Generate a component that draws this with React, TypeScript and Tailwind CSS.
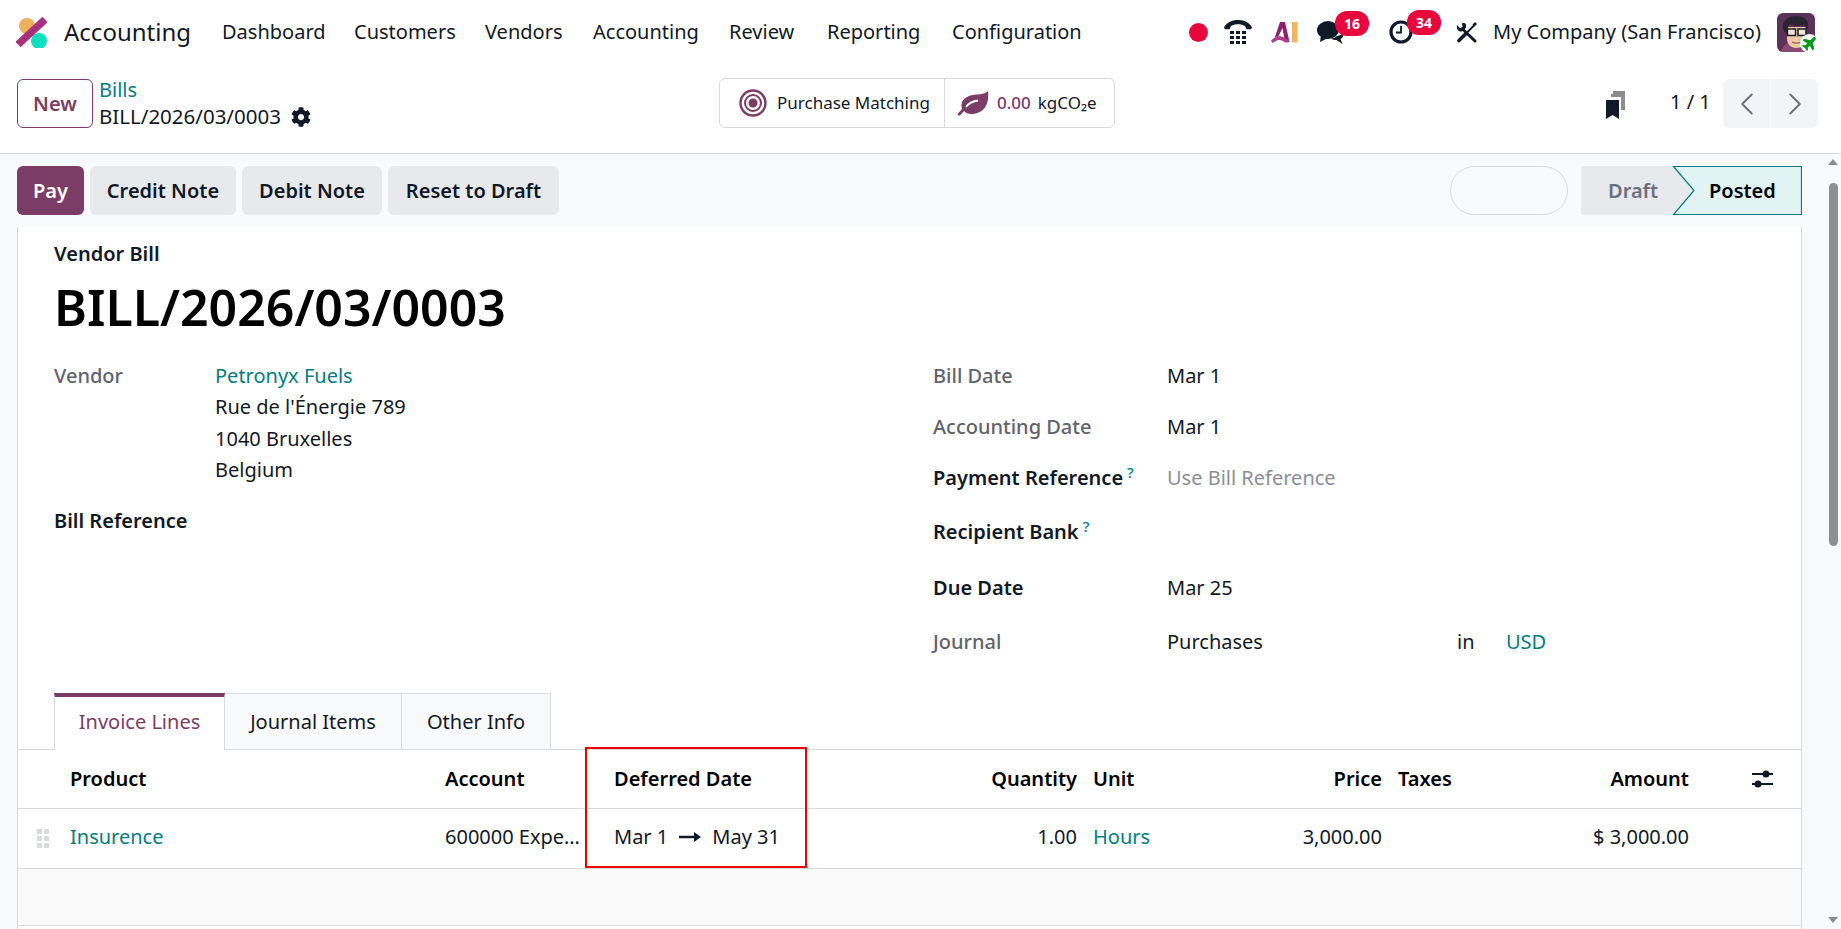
import { ChevronLeft, ChevronRight } from 'lucide-react'
import { FaCog, FaPlane } from 'react-icons/fa'

const navItems = [
  { label: 'Dashboard', width: 'w-[132px]' },
  { label: 'Customers', width: 'w-[131px]' },
  { label: 'Vendors', width: 'w-[108px]' },
  { label: 'Accounting', width: 'w-[136px]' },
  { label: 'Review', width: 'w-[98px]' },
  { label: 'Reporting', width: 'w-[125px]' },
  { label: 'Configuration', width: 'w-[132px]' },
]

const tableColumns =
  'grid grid-cols-[52px_375px_169px_169px_294px_183px_122px_178px_129px_112px] items-center border-b border-[#d8dadd]'

function AppLogo() {
  return (
    <svg width="32" height="32" viewBox="0 0 32 32" aria-hidden="true">
      <circle cx="11" cy="10" r="8" fill="#eeb05c" />
      <circle cx="23" cy="25" r="8" fill="#0ce0bd" />
      <path d="M2 28.500 29 3.500" stroke="#a9327f" strokeWidth="7.500" />
      <path d="M8 23 23 9" stroke="#6e1f50" strokeWidth="1.200" strokeDasharray="1 3" />
    </svg>
  )
}

function PhoneIcon() {
  return (
    <svg width="28" height="25" viewBox="0 0 28 25" fill="#111827" aria-hidden="true">
      <path d="M0 7.500C3 2 8 0 14 0s11 2 14 7.500l-1 1.800h-4.500L21 6c-2-1.200-4.500-1.800-7-1.800S9 4.800 7 6L5.500 9.300H1Z" />
      <rect x="6" y="11" width="4" height="3" />
      <rect x="12" y="11" width="4" height="3" />
      <rect x="18" y="11" width="4" height="3" />
      <rect x="6" y="16" width="4" height="3" />
      <rect x="12" y="16" width="4" height="3" />
      <rect x="18" y="16" width="4" height="3" />
      <rect x="6" y="21" width="4" height="3" />
      <rect x="12" y="21" width="4" height="3" />
      <rect x="18" y="21" width="4" height="3" />
    </svg>
  )
}

function AiIcon() {
  return (
    <svg width="27" height="21" viewBox="0 0 27 21" aria-hidden="true">
      <path d="M9 0h5l4.500 20H14L11.500 6 7 15H4Z" fill="#8e1f6e" />
      <path d="M0 19c3-5 9-6 13-3.500l4.500 2.500.5 2.500h-4c-3-3-7-3.500-10-1L1.500 21Z" fill="#b0408c" />
      <rect x="21" y="0" width="5.500" height="20.500" fill="#f0b660" />
    </svg>
  )
}

function ChatIcon() {
  return (
    <svg width="28" height="23" viewBox="0 0 28 23" fill="#111827" aria-hidden="true">
      <ellipse cx="11" cy="9" rx="11" ry="9" />
      <path d="M4 14 3 21l8-4Z" />
      <path d="M20 15c3-.5 5-1.500 6-3 1 3-.2 5-2.500 6l2 5-6-4c-2 0-4-.5-5.500-1.500 2.500 0 4.500-1 6-2.500Z" />
    </svg>
  )
}

function ClockIcon() {
  return (
    <svg width="24" height="24" viewBox="0 0 24 24" fill="none" stroke="#111827" aria-hidden="true">
      <circle cx="12" cy="12" r="10" strokeWidth="3.200" />
      <path d="M12 6v6.500H7" strokeWidth="1.800" />
    </svg>
  )
}

function ToolsIcon() {
  return (
    <svg width="21" height="21" viewBox="0 0 21 21" fill="#111827" aria-hidden="true">
      <path d="M1 3l3 3 2.500-1L6 1.500C8.500 0 11 2.500 10 5.500L8 8 5.500 9.500C2.500 10 0 6.500 1 3Z" />
      <path d="M7 7.500 19 19" stroke="#111827" strokeWidth="3" strokeLinecap="round" />
      <path d="M18 3.500 11 10.500" stroke="#111827" strokeWidth="1.800" />
      <path d="M9.500 12 3 18.500" stroke="#111827" strokeWidth="3.600" strokeLinecap="round" />
      <path d="M16.500 2.500 19 0l2 2-2.500 2.500Z" />
    </svg>
  )
}

function Avatar() {
  return (
    <div className="relative h-[39px] w-[39px]">
      <svg width="38" height="39" viewBox="0 0 38 39" aria-hidden="true" className="rounded-[6px]">
        <rect width="38" height="39" fill="#5c3358" />
        <path d="M5 39c0-7 5-9 9-10h10c5 1 8 3 8 10Z" fill="#8a4a74" />
        <path d="M10 14h19v12c0 6-5 9-10 9s-9-4-9-9Z" fill="#efc9a4" />
        <path d="M6 16C4 9 10 3 19 3c7 0 13 3 12 11l-2 3-1-5c-6 1-11 1-16-1l-2 8-2 1Z" fill="#2a2430" />
        <rect x="10.500" y="16" width="8" height="6.500" fill="#f3e7da" stroke="#1d1d26" strokeWidth="1.500" />
        <rect x="21" y="16" width="8" height="6.500" fill="#f3e7da" stroke="#1d1d26" strokeWidth="1.500" />
        <path d="M15 29c3 1.500 6 1.500 9 0" stroke="#9c5a48" strokeWidth="1.300" fill="none" />
      </svg>
      <span className="absolute right-[-3px] bottom-[-1px] flex h-[19px] w-[19px] items-center justify-center rounded-full bg-white text-[#0c9a1e]">
        <FaPlane size={16} className="-rotate-45" aria-hidden="true" />
      </span>
    </div>
  )
}

function Badge({ value }: { value: number }) {
  return (
    <span className="absolute top-[-10px] left-[18px] flex h-[25px] w-[34px] items-center justify-center rounded-[12px] bg-[#e8063c] text-[14px] font-bold text-white">
      {value}
    </span>
  )
}

function TargetIcon() {
  return (
    <svg width="28" height="28" viewBox="0 0 28 28" fill="none" stroke="#7b3d65" aria-hidden="true">
      <circle cx="14" cy="14" r="12.500" strokeWidth="2.400" />
      <circle cx="14" cy="14" r="8" strokeWidth="2" />
      <circle cx="14" cy="14" r="4.500" fill="#7b3d65" stroke="none" />
    </svg>
  )
}

function LeafIcon() {
  return (
    <svg width="32" height="25" viewBox="0 0 32 25" aria-hidden="true">
      <path d="M31 0C32.500 12 28 22 16 23c-4 .5-7-1-9-3l-4 4.500C1.500 25 0 24 1 22.500L5 18C2 8 12 3.500 20 3.500 25 3.500 29 2 31 0Z" fill="#7b3d65" />
      <path d="M9 16c3-4 7-6 12-6.500" stroke="#fff" strokeWidth="1.800" fill="none" />
    </svg>
  )
}

function BookmarkIcon() {
  return (
    <svg width="19" height="28" viewBox="0 0 19 28" aria-hidden="true">
      <path d="M7 0h12v19h-2V4H7Z" fill="#8d8d8d" />
      <path d="M5 3h12v16h-2V6H5Z" fill="#8d8d8d" />
      <path d="M0 9h13v19l-6.500-4L0 28Z" fill="#111827" />
    </svg>
  )
}

function ColumnsIcon() {
  return (
    <svg width="21" height="18" viewBox="0 0 21 18" fill="#111827" aria-hidden="true">
      <rect y="3" width="21" height="2" />
      <rect y="13" width="21" height="2" />
      <circle cx="14" cy="4" r="3.500" />
      <circle cx="6" cy="14" r="3.500" />
    </svg>
  )
}

function FieldRow({
  label,
  strong,
  help,
  height,
  children,
}: {
  label: string
  strong?: boolean
  help?: boolean
  height: string
  children?: React.ReactNode
}) {
  return (
    <div className={`flex items-start leading-[32px] ${height}`}>
      <div className={`w-[234px] whitespace-nowrap ${strong ? 'font-semibold text-[#111827]' : 'font-medium text-[#5f636f]'}`}>
        {label}
        {help && <sup className="ml-1 text-[15px] font-medium text-[#017e84]">?</sup>}
      </div>
      {children}
    </div>
  )
}

export default function App() {
  return (
    <div
      className="flex h-[929px] w-[1841px] flex-col overflow-hidden bg-white text-[20px] text-[#111827]"
      style={{ fontFamily: '"Noto Sans", sans-serif' }}
    >
      <header className="flex h-[64px] shrink-0 items-center pl-[16px]">
        <AppLogo />
        <span className="ml-[16px] w-[158px] text-[24px]">Accounting</span>
        <nav className="flex">
          {navItems.map((item) => (
            <span key={item.label} className={`whitespace-nowrap ${item.width}`}>
              {item.label}
            </span>
          ))}
        </nav>
        <div className="ml-[105px] h-[19px] w-[19px] rounded-full bg-[#e8063c]" />
        <div className="ml-[16px]">
          <PhoneIcon />
        </div>
        <div className="ml-[19px]">
          <AiIcon />
        </div>
        <div className="relative ml-[19px]">
          <ChatIcon />
          <Badge value={16} />
        </div>
        <div className="relative ml-[44px]">
          <ClockIcon />
          <Badge value={34} />
        </div>
        <div className="ml-[43px]">
          <ToolsIcon />
        </div>
        <span className="ml-[16px] w-[284px] whitespace-nowrap">My Company (San Francisco)</span>
        <Avatar />
      </header>

      <div className="flex h-[90px] shrink-0 items-start border-b border-[#d8dadd] pt-[15px] pl-[17px]">
        <button
          type="button"
          className="h-[49px] w-[76px] rounded-[6px] border border-[#7b3d65] bg-white font-semibold text-[#7b3d65]"
        >
          New
        </button>
        <div className="-mt-[3px] ml-[6px] w-[620px] leading-[27px]">
          <div className="text-[#017e84]">Bills</div>
          <div className="flex items-center gap-[10px] text-[20.500px]">
            BILL/2026/03/0003
            <FaCog size={20} aria-hidden="true" />
          </div>
        </div>
        <div className="flex h-[50px] w-[396px] -translate-y-[1px] items-center rounded-[6px] border border-[#d8dadd] text-[17px]">
          <div className="flex h-full w-[225px] items-center gap-[10px] border-r border-[#d8dadd] pl-[19px]">
            <TargetIcon />
            <span className="whitespace-nowrap">Purchase Matching</span>
          </div>
          <div className="flex items-center whitespace-nowrap pl-[12px]">
            <LeafIcon />
            <span className="ml-[8px] font-medium text-[#7b3d65]">0.00</span>
            <span className="ml-[7px]">kgCO₂e</span>
          </div>
        </div>
        <div className="mt-[12px] ml-[491px]">
          <BookmarkIcon />
        </div>
        <span className="mt-[8px] ml-[45px] w-[53px] whitespace-nowrap">1 / 1</span>
        <div className="flex h-[49px] w-[95px] gap-[1px] overflow-hidden rounded-[6px]">
          <div className="flex flex-1 items-center justify-center bg-[#f3f4f6]">
            <ChevronLeft size={38} strokeWidth={1.200} className="text-[#6b7080]" aria-hidden="true" />
          </div>
          <div className="flex flex-1 items-center justify-center bg-[#f3f4f6]">
            <ChevronRight size={38} strokeWidth={1.200} className="text-[#6b7080]" aria-hidden="true" />
          </div>
        </div>
      </div>

      <div className="flex min-h-0 flex-1 bg-[#f9fafb]">
        <main className="flex w-[1825px] flex-col">
          <div className="flex h-[73px] shrink-0 items-start gap-[6px] pt-[12px] pl-[17px] font-semibold">
            <button type="button" className="h-[49px] w-[67px] rounded-[6px] bg-[#7b3d65] text-white">
              Pay
            </button>
            <button type="button" className="h-[49px] w-[146px] rounded-[6px] bg-[#e7e9ed]">
              Credit Note
            </button>
            <button type="button" className="h-[49px] w-[140px] rounded-[6px] bg-[#e7e9ed]">
              Debit Note
            </button>
            <button type="button" className="h-[49px] w-[171px] rounded-[6px] bg-[#e7e9ed]">
              Reset to Draft
            </button>
            <div className="ml-[885px] h-[49px] w-[118px] rounded-[25px] border border-[#d8dadd]" />
            <div className="relative ml-[7px] flex h-[49px] w-[221px]">
              <svg width="221" height="49" viewBox="0 0 221 49" className="absolute inset-0" aria-hidden="true">
                <rect width="115" height="49" rx="3" fill="#e7e9ed" />
                <path
                  d="M92.500.5 113 24.500 92.500 48.500H220.500V.5Z"
                  fill="#e2f3f3"
                  stroke="#017e84"
                  strokeWidth="1.200"
                />
              </svg>
              <span className="relative w-[128px] pl-[27px] leading-[49px] text-[#6b7080]">Draft</span>
              <span className="relative leading-[49px] text-black">Posted</span>
            </div>
          </div>

          <section className="ml-[17px] flex min-h-0 w-[1785px] flex-1 flex-col border-x border-[#d8dadd] bg-white">
            <div className="h-[467px] shrink-0 pl-[36px]">
              <div className="pt-[13px] font-semibold leading-[27px]">Vendor Bill</div>
              <h1 className="mt-[10px] text-[50px] font-semibold leading-[60px] text-black">BILL/2026/03/0003</h1>
              <div className="mt-[23px] flex">
                <div className="w-[879px]">
                  <div className="flex leading-[31.400px]">
                    <div className="w-[161px] font-medium text-[#5f636f]">Vendor</div>
                    <div>
                      <div className="text-[#017e84]">Petronyx Fuels</div>
                      <div>Rue de l'Énergie 789</div>
                      <div>1040 Bruxelles</div>
                      <div>Belgium</div>
                    </div>
                  </div>
                  <div className="mt-[19px] font-semibold leading-[32px]">Bill Reference</div>
                </div>
                <div>
                  <FieldRow label="Bill Date" height="h-[51px]">
                    Mar 1
                  </FieldRow>
                  <FieldRow label="Accounting Date" height="h-[51px]">
                    Mar 1
                  </FieldRow>
                  <FieldRow label="Payment Reference" strong help height="h-[54px]">
                    <span className="text-[#8b8e97]">Use Bill Reference</span>
                  </FieldRow>
                  <FieldRow label="Recipient Bank" strong help height="h-[56px]" />
                  <FieldRow label="Due Date" strong height="h-[54px]">
                    Mar 25
                  </FieldRow>
                  <FieldRow label="Journal" height="h-[32px]">
                    <span className="w-[290px]">Purchases</span>
                    <span className="w-[49px]">in</span>
                    <span className="text-[#017e84]">USD</span>
                  </FieldRow>
                </div>
              </div>
            </div>

            <div className="flex h-[56px] shrink-0 items-end border-b border-[#d8dadd] pl-[36px]">
              <div className="-mb-px flex h-[57px] w-[171px] items-center justify-center border-x border-t-4 border-x-[#d8dadd] border-t-[#7b3d65] bg-white pb-[3px] text-[#7b3d65]">
                Invoice Lines
              </div>
              <div className="flex h-[56px] w-[177px] items-center justify-center border-t border-r border-[#d8dadd] bg-[#f9fafb]">
                Journal Items
              </div>
              <div className="flex h-[56px] w-[149px] items-center justify-center border-t border-r border-[#d8dadd] bg-[#f9fafb]">
                Other Info
              </div>
            </div>

            <div className="relative shrink-0">
              <div className={`${tableColumns} h-[59px] font-semibold text-black`}>
                <div />
                <div>Product</div>
                <div>Account</div>
                <div>Deferred Date</div>
                <div className="text-right">Quantity</div>
                <div className="pl-[16px]">Unit</div>
                <div className="text-right">Price</div>
                <div className="pl-[16px]">Taxes</div>
                <div className="text-right">Amount</div>
                <div className="flex justify-end pr-[28px]">
                  <ColumnsIcon />
                </div>
              </div>
              <div className={`${tableColumns} h-[60px] pb-[4px]`}>
                <div className="ml-[19px] grid w-[12px] translate-y-[2px] grid-cols-2 gap-[2px]">
                  {[0, 1, 2, 3, 4, 5].map((dot) => (
                    <span key={dot} className="h-[5px] w-[5px] bg-[#d8dadd]" />
                  ))}
                </div>
                <div className="text-[#017e84]">Insurence</div>
                <div className="whitespace-nowrap">600000 Expe…</div>
                <div className="flex items-center whitespace-nowrap">
                  Mar 1
                  <svg width="22" height="10" viewBox="0 0 22 10" className="mx-[11px]" aria-hidden="true">
                    <path d="M0 3.800h15V0l7 5-7 5V6.200H0Z" fill="#111827" />
                  </svg>
                  May 31
                </div>
                <div className="text-right">1.00</div>
                <div className="pl-[16px] text-[#017e84]">Hours</div>
                <div className="text-right">3,000.00</div>
                <div />
                <div className="text-right whitespace-nowrap">$ 3,000.00</div>
                <div />
              </div>
              <div className="absolute top-[-3px] left-[567px] h-[121px] w-[222px] border-2 border-[#f00000]" />
            </div>

            <div className="h-[57px] shrink-0 border-b border-[#d8dadd] bg-[#fafafa]" />
          </section>
        </main>

        <aside className="relative w-[16px] bg-[#f9fafb]">
          <span className="absolute top-[5px] left-[3px] h-0 w-0 border-x-[5px] border-b-[6px] border-x-transparent border-b-[#8d8d8d]" />
          <div className="absolute top-[29px] left-[4px] h-[363px] w-[9px] rounded-[5px] bg-[#8f8f8f]" />
          <span className="absolute bottom-[6px] left-[3px] h-0 w-0 border-x-[5px] border-t-[6px] border-x-transparent border-t-[#8d8d8d]" />
        </aside>
      </div>
    </div>
  )
}
